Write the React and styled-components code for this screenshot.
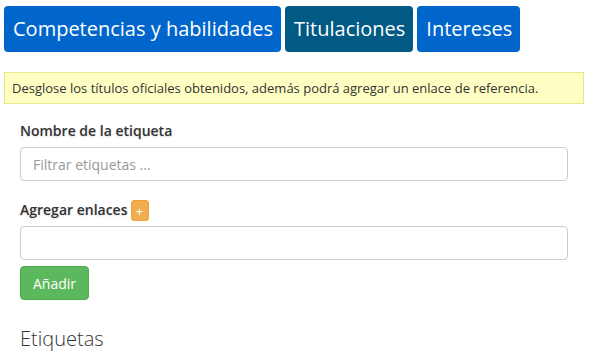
import React from 'react'
import styled, { createGlobalStyle } from 'styled-components'

const GlobalStyle = createGlobalStyle`
  body {
    margin: 0;
    background: #fff;
    font-family: "Open Sans", "Noto Sans", sans-serif;
    color: #333;
  }
`

const tabs = [
  { label: 'Competencias y habilidades', active: false },
  { label: 'Titulaciones', active: true },
  { label: 'Intereses', active: false },
]

function App() {
  return (
    <Page>
      <GlobalStyle />
      <TabBar>
        {tabs.map((t) => (
          <Tab key={t.label} $active={t.active}>
            {t.label}
          </Tab>
        ))}
      </TabBar>
      <Notice>
        Desglose los títulos oficiales obtenidos, además podrá agregar un enlace de referencia.
      </Notice>
      <Form>
        <Field $gap={19}>
          <Label>Nombre de la etiqueta</Label>
          <Input placeholder="Filtrar etiquetas ..." />
        </Field>
        <Field $gap={6}>
          <Label>
            Agregar enlaces
            <PlusBadge>+</PlusBadge>
          </Label>
          <Input />
        </Field>
        <AddButton>Añadir</AddButton>
        <Heading>Etiquetas</Heading>
      </Form>
    </Page>
  )
}

export default App

const Page = styled.div`
  padding: 6px 7px 0 4px;
`

const TabBar = styled.div`
  display: flex;
  gap: 4px;
`

const Tab = styled.div`
  background-color: ${(p) => (p.$active ? '#005a84' : '#0066cc')};
  color: #fff;
  font-size: 20px;
  line-height: 46px;
  height: 46px;
  padding: 0 8px 0 9px;
  border-radius: 4px;
  white-space: nowrap;
`

const Notice = styled.div`
  margin-top: 20px;
  background-color: #ffffc4;
  border: 1px solid #e6e68a;
  font-size: 13px;
  line-height: 30px;
  padding: 0 8px 0 7px;
  color: #333;
`

const Form = styled.div`
  padding: 0 16px;
  margin-top: 17px;
  display: flex;
  flex-direction: column;
`

const Field = styled.div`
  display: flex;
  flex-direction: column;
  margin-bottom: ${(p) => p.$gap}px;
`

const Label = styled.div`
  font-weight: 600;
  font-size: 14px;
  line-height: 20px;
  height: 20px;
  margin-bottom: 6px;
  display: flex;
  align-items: center;
  gap: 3px;
  text-shadow: 0 1px 2px rgba(0, 0, 0, 0.15);
`

const PlusBadge = styled.span`
  flex: 0 0 18px;
  display: block;
  width: 18px;
  height: 21px;
  line-height: 21px;
  text-align: center;
  background-color: #f0ad4e;
  border: 1px solid #eea236;
  box-sizing: border-box;
  color: #fff;
  font-weight: 400;
  font-size: 13px;
  border-radius: 3px;
  text-shadow: none;
`

const Input = styled.input`
  box-sizing: border-box;
  height: 34px;
  border: 1px solid #ccc;
  border-radius: 4px;
  padding: 6px 12px;
  font-family: "Open Sans", "Noto Sans", sans-serif;
  font-size: 14px;
  color: #555;
  &::placeholder {
    color: #999;
  }
`

const AddButton = styled.button`
  align-self: flex-start;
  background-color: #5cb85c;
  border: 1px solid #4cae4c;
  color: #fff;
  font-family: "Open Sans", "Noto Sans", sans-serif;
  font-size: 14px;
  height: 34px;
  padding: 0 12px;
  border-radius: 4px;
`

const Heading = styled.div`
  font-size: 20px;
  font-weight: 300;
  line-height: 27px;
  margin-top: 25px;
  color: #333;
`
